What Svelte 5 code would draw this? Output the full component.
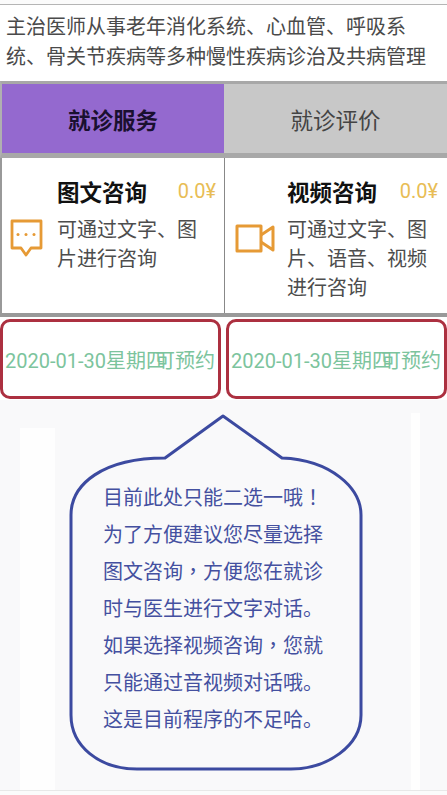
<script>
  const tabs = [
    { label: '就诊服务', active: true },
    { label: '就诊评价', active: false }
  ];
  const services = [
    { title: '图文咨询', price: '0.0¥', desc: '可通过文字、图片进行咨询', icon: 'chat' },
    { title: '视频咨询', price: '0.0¥', desc: '可通过文字、图片、语音、视频进行咨询', icon: 'video' }
  ];
  const notes = [
    '目前此处只能二选一哦！',
    '为了方便建议您尽量选择',
    '图文咨询，方便您在就诊',
    '时与医生进行文字对话。',
    '如果选择视频咨询，您就',
    '只能通过音视频对话哦。',
    '这是目前程序的不足哈。'
  ];
  // the comma and the exclamation mark sit centred in their cell in the reference
  const parts = (line) => line.split(/([，！])/).filter(Boolean);
</script>

<div class="page">
  <p class="intro">主治医师从事老年消化系统、心血管、呼吸系统、骨关节疾病等多种慢性疾病诊治及共病管理</p>

  <div class="tabs">
    {#each tabs as tab}
      <div class="tab" class:active={tab.active}>{tab.label}</div>
    {/each}
  </div>

  <div class="services">
    {#each services as s}
      <div class="service">
        <div class="icon">
          {#if s.icon === 'chat'}
            <svg width="34" height="40" viewBox="0 0 34 40" fill="none">
              <path d="M2 2h29v27H21l-5 7-5-7H2z" stroke="#e69a35" stroke-width="2.8" stroke-linejoin="round" />
              <circle cx="8" cy="15.5" r="1.5" fill="#e69a35" />
              <circle cx="16" cy="15.5" r="1.5" fill="#e69a35" />
              <circle cx="24" cy="15.5" r="1.5" fill="#e69a35" />
            </svg>
          {:else}
            <svg width="40" height="30" viewBox="0 0 40 30" fill="none">
              <path d="M2 2h24v25H2z" stroke="#e69a35" stroke-width="3" stroke-linejoin="round" />
              <path d="M26 11l12-8v23l-12-8" stroke="#e69a35" stroke-width="3" stroke-linejoin="round" />
            </svg>
          {/if}
        </div>
        <div class="info">
          <div class="head">
            <span class="title">{s.title}</span>
            <span class="price">{s.price}</span>
          </div>
          <p class="desc">{s.desc}</p>
        </div>
      </div>
    {/each}
  </div>

  <div class="dates">
    {#each services as s}
      <div class="date">
        <span>2020-01-30星期四</span>
        <span class="state">可预约</span>
      </div>
    {/each}
  </div>

  <div class="note">
    <div class="bubble">
      <svg class="outline" width="296" height="360" viewBox="0 0 296 360" fill="none">
        <path
          d="M154 2L213 44C262 46 292 74 292 101V301C292 332 258 355 222 355H68C30 355 2 332 2 301V101C2 70 34 44 96 44Z"
          stroke="#3c4aa0"
          stroke-width="3"
          stroke-linejoin="round"
        />
      </svg>
      {#each notes as line}
        <div class="line">
          {#each parts(line) as part}
            {#if part === '，' || part === '！'}<span class="mark">{part}</span>{:else}{part}{/if}
          {/each}
        </div>
      {/each}
    </div>
  </div>
</div>

<style>
  :global(body) {
    margin: 0;
    background: #fff;
  }
  .page {
    width: 447px;
    height: 795px;
    overflow: hidden;
    font-family: Roboto, "Noto Sans CJK SC", sans-serif;
    color: #444;
    background: #fbfbfb;
    display: flex;
    flex-direction: column;
  }
  .intro {
    margin: 4px 0 0;
    height: 77px;
    box-sizing: border-box;
    background: #fff;
    border-top: 1.5px solid #b5b5b5;
    padding: 8px 6px 0;
    font-size: 20px;
    line-height: 29.5px;
    color: #4a4a4a;
  }
  .tabs {
    display: flex;
    height: 77px;
    box-sizing: border-box;
    background: #c8c8c8;
    border-top: 3px solid #a8a8a8;
    border-left: 2px solid #b0b0b0;
    border-bottom: 5px solid #a8a8a8;
  }
  .tab {
    flex: 1;
    display: flex;
    align-items: center;
    justify-content: center;
    font-size: 22.5px;
    color: #444;
  }
  .tab.active {
    flex: 0 0 222px;
    background: #9469cf;
    color: #1a1030;
    font-weight: 700;
  }
  .services {
    display: flex;
    height: 159px;
    box-sizing: border-box;
    background: #fff;
    border-left: 2px solid #999;
    border-bottom: 4px solid #999;
  }
  .service {
    flex: 1;
    display: flex;
    align-items: center;
    padding-left: 8px;
    box-sizing: border-box;
  }
  .service + .service {
    flex: 0 0 223px;
    border-left: 1.5px solid #888;
    padding-left: 10px;
  }
  .icon {
    width: 47px;
    flex: none;
    display: flex;
    margin-top: 6px;
  }
  .service + .service .icon {
    width: 52px;
  }
  .info {
    flex: 1;
    align-self: flex-start;
    padding-top: 18px;
  }
  .head {
    display: flex;
    align-items: center;
    justify-content: space-between;
    padding-right: 8px;
    height: 30px;
  }
  .service + .service .head {
    padding-right: 9px;
  }
  .title {
    font-size: 22.5px;
    font-weight: 700;
    color: #111;
  }
  .price {
    font-size: 20px;
    color: #e8bd55;
  }
  .desc {
    margin: 10px 0 0;
    font-size: 20px;
    line-height: 29px;
    color: #4d4d4d;
    padding-right: 12px;
  }
  .dates {
    display: flex;
    justify-content: space-between;
    height: 83px;
    padding-top: 2px;
    box-sizing: border-box;
    background: #fff;
  }
  .date {
    width: 221px;
    height: 80px;
    box-sizing: border-box;
    border: 3px solid #ac3040;
    border-radius: 10px;
    display: flex;
    align-items: center;
    padding: 1px 0 0 2px;
    color: #7cc49d;
    font-size: 20px;
    white-space: nowrap;
  }
  .state {
    margin-left: -11px;
  }
  .note {
    flex: 1;
    margin-bottom: 4px;
    border-bottom: 1px solid #e8e8e8;
    /* paler vertical bands left in the pasted image behind the bubble */
    background:
      linear-gradient(#fefefe, #fefefe) 20px 28px / 35px 100% no-repeat,
      linear-gradient(#fefefe, #fefefe) 411px 13px / 9px 100% no-repeat,
      #f9f9fa;
    padding-top: 14px;
  }
  .bubble {
    position: relative;
    width: 296px;
    height: 360px;
    margin-left: 69px;
    box-sizing: border-box;
    padding: 66px 0 0 34px;
  }
  .outline {
    position: absolute;
    inset: 0;
  }
  .line {
    position: relative;
    font-size: 20px;
    line-height: 37px;
    color: #4450a0;
    white-space: nowrap;
  }
  .mark {
    font-family: Roboto, "Noto Sans CJK TC", sans-serif;
  }
</style>
